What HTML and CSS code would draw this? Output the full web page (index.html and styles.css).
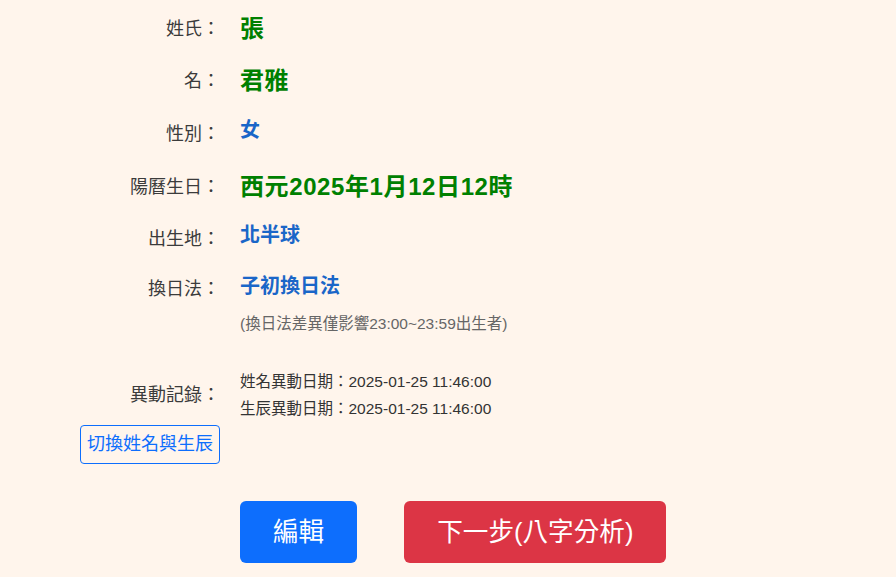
FILE: index.html
```html
<!DOCTYPE html>
<html lang="zh-Hant">
<head>
    <meta charset="UTF-8">
    <meta name="viewport" content="width=device-width, initial-scale=1.0">
    <title>基本資料</title>
    <link rel="stylesheet" href="styles.css">
</head>
<body>
    <div class="profile">
        <div class="field">
            <div class="field-label">姓氏：</div>
            <div class="field-value big green">張</div>
        </div>
        <div class="field">
            <div class="field-label">名：</div>
            <div class="field-value big green">君雅</div>
        </div>
        <div class="field tall">
            <div class="field-label">性別：</div>
            <div class="field-value blue">女</div>
        </div>
        <div class="field">
            <div class="field-label">陽曆生日：</div>
            <div class="field-value big green">西元2025年1月12日12時</div>
        </div>
        <div class="field">
            <div class="field-label">出生地：</div>
            <div class="field-value blue">北半球</div>
        </div>
        <div class="field short">
            <div class="field-label">換日法：</div>
            <div class="field-value blue">子初換日法</div>
        </div>
        <div class="note">(換日法差異僅影響23:00~23:59出生者)</div>

        <div class="field records">
            <div class="field-label">異動記錄：</div>
            <div class="record-list">
                <div>姓名異動日期：2025-01-25 11:46:00</div>
                <div>生辰異動日期：2025-01-25 11:46:00</div>
            </div>
        </div>
        <div class="switch-row">
            <button class="btn-outline" id="switchButton">切換姓名與生辰</button>
        </div>

        <div class="actions">
            <button class="btn btn-primary" id="editButton">編輯</button>
            <button class="btn btn-danger" id="nextButton">下一步(八字分析)</button>
        </div>
    </div>
</body>
</html>
```

FILE: styles.css
```css
body {
    background-color: #fff5ec;
    color: #333333;
    font-family: "Liberation Sans", "Noto Sans CJK TC", sans-serif;
    margin: 0;
    padding: 3px 0 0 0;
}

.profile {
    width: 896px;
}

.field {
    display: flex;
    align-items: center;
    height: 52px;
}

.field.tall {
    height: 54px;
}

.field.short {
    height: 49px;
}

.field-label {
    width: 220px;
    flex-shrink: 0;
    text-align: right;
    font-size: 18px;
    line-height: 27px;
    color: #3b3b3b;
}

.field-value {
    margin-left: 20px;
    font-weight: bold;
}

.field-value.big {
    font-size: 24px;
    line-height: 32px;
    letter-spacing: 0.6px;
}

.field-value.blue {
    font-size: 20px;
    line-height: 28px;
    margin-bottom: 8px;
    color: #1a66c8;
}

.green {
    color: #008000;
}

.note {
    margin-left: 240px;
    font-size: 15.5px;
    line-height: 19px;
    color: #666666;
}

.records {
    height: 54px;
    margin-top: 35px;
}

.record-list {
    margin-left: 20px;
    font-size: 15.5px;
    line-height: 27px;
    color: #333333;
}

.switch-row {
    width: 220px;
    display: flex;
    justify-content: flex-end;
    margin-top: 3px;
}

.btn-outline {
    background-color: transparent;
    color: #0d6efd;
    border: 1px solid #0d6efd;
    border-radius: 4px;
    padding: 5px 6px;
    font-family: inherit;
    font-size: 18px;
    line-height: 27px;
    cursor: pointer;
}

.actions {
    display: flex;
    gap: 47px;
    margin: 37px 0 0 240px;
}

.btn {
    border: 1px solid transparent;
    border-radius: 6px;
    padding: 11px 32px;
    font-family: inherit;
    font-size: 25.6px;
    line-height: 38px;
    color: #ffffff;
    cursor: pointer;
}

.btn-primary {
    background-color: #0d6efd;
}

.btn-danger {
    background-color: #dc3545;
}
```
